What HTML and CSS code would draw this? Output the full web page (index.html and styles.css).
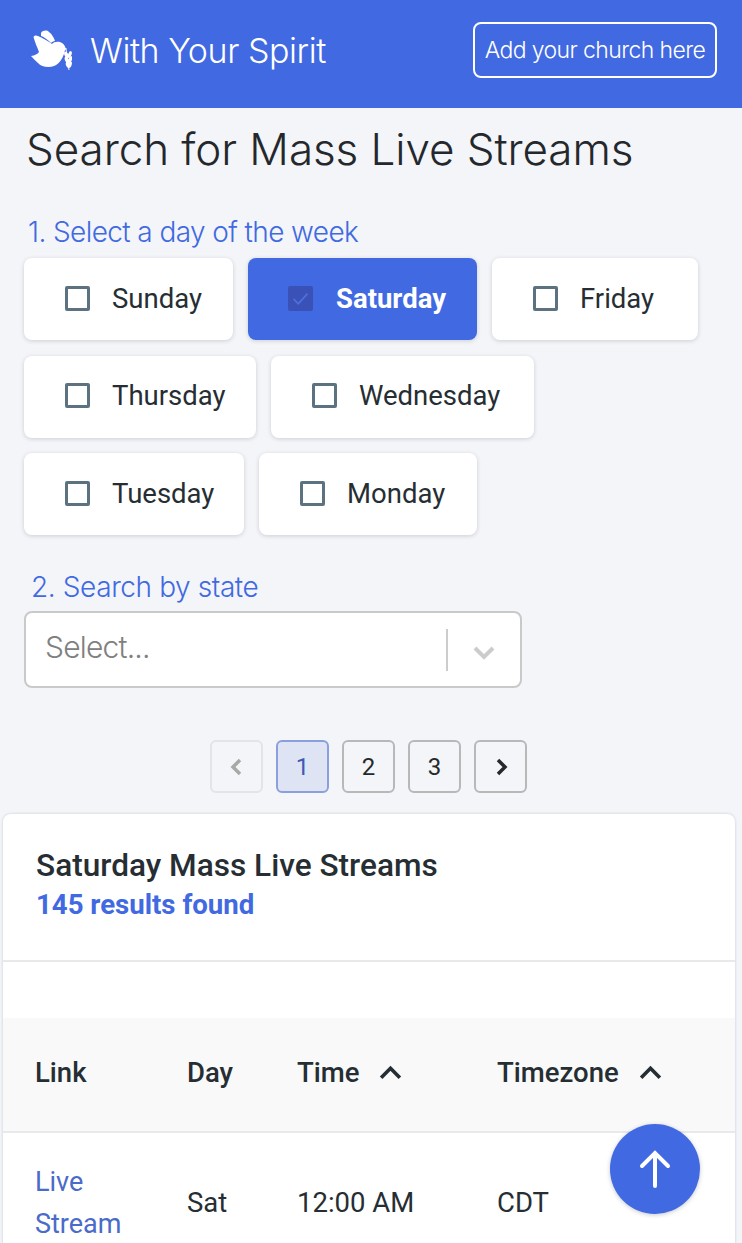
FILE: index.html
```html
<!DOCTYPE html>
<html lang="en">
<head>
  <meta charset="UTF-8">
  <meta name="viewport" content="width=device-width, initial-scale=1.0">
  <title>With Your Spirit</title>
  <link rel="stylesheet" href="styles.css">
</head>
<body>
  <header class="topbar">
    <div class="brand">
      <svg class="dove" viewBox="30 30 42 44" aria-hidden="true">
        <path d="M31 58C35 57.500 37.500 56 39 54C37 49 34.500 43 33.500 39C34 37.500 36 37 38 38C43 40 48 43 52 46C54 43.500 59 43 62 45C64 46 65 48 65.500 50L67 50.500L65 52C64 58 60 66 54 68C49 70 41 69 38 65C36 63 33 60.500 31 58Z"/>
        <path d="M41 35C43 32 47 32 49 34C52 36 54 40 55 43C53 43 52 44 51 45C48 42 44 39 41 38Z"/>
        <path class="stem" d="M66 51L69 72"/>
        <ellipse cx="66.500" cy="57" rx="2" ry="3.500" transform="rotate(-25 66.500 57)"/>
        <ellipse cx="69.800" cy="56.500" rx="1.700" ry="3.500" transform="rotate(20 69.800 56.500)"/>
        <ellipse cx="67" cy="62" rx="2" ry="3.500" transform="rotate(-25 67 62)"/>
        <ellipse cx="70.300" cy="61.500" rx="1.700" ry="3.500" transform="rotate(20 70.300 61.500)"/>
        <ellipse cx="67.800" cy="67" rx="1.800" ry="3.200" transform="rotate(-20 67.800 67)"/>
        <ellipse cx="70.200" cy="66.500" rx="1.500" ry="3.200" transform="rotate(15 70.200 66.500)"/>
      </svg>
      <span class="brand-name">With Your Spirit</span>
    </div>
    <a class="add-church" href="#">Add your church here</a>
  </header>

  <main>
    <section class="search">
      <h1>Search for Mass Live Streams</h1>
      <p class="step">1. Select a day of the week</p>
      <div class="days">
        <label class="day sunday"><span class="box"></span>Sunday</label>
        <label class="day saturday active">
          <span class="box"><svg viewBox="0 0 24 24"><path d="M4 12.500l5.500 5.500L20 6.500"/></svg></span>Saturday
        </label>
        <label class="day friday"><span class="box"></span>Friday</label>
        <label class="day thursday"><span class="box"></span>Thursday</label>
        <label class="day wednesday"><span class="box"></span>Wednesday</label>
        <label class="day tuesday"><span class="box"></span>Tuesday</label>
        <label class="day monday"><span class="box"></span>Monday</label>
      </div>
      <p class="step step-state">2. Search by state</p>
      <div class="select">
        <span class="placeholder">Select...</span>
        <span class="divider"></span>
        <svg class="caret" viewBox="0 0 24 24"><path d="M3 8l9 9 9-9"/></svg>
      </div>
    </section>

    <nav class="pager">
      <a class="disabled" href="#"><svg viewBox="0 0 24 24"><path d="M15 5l-7 7 7 7"/></svg></a>
      <a class="current" href="#">1</a>
      <a href="#">2</a>
      <a href="#">3</a>
      <a href="#"><svg viewBox="0 0 24 24"><path d="M9 5l7 7-7 7"/></svg></a>
    </nav>

    <section class="results">
      <div class="results-head">
        <h2>Saturday Mass Live Streams</h2>
        <p>145 results found</p>
      </div>
      <div class="results-gap"></div>
      <table>
        <thead>
          <tr>
            <th class="col-link">Link</th>
            <th class="col-day">Day</th>
            <th class="col-time">Time <svg class="sort" viewBox="0 0 24 24"><path d="M3 17L12 8l9 9"/></svg></th>
            <th>Timezone <svg class="sort" viewBox="0 0 24 24"><path d="M3 17L12 8l9 9"/></svg></th>
          </tr>
        </thead>
        <tbody>
          <tr>
            <td><a href="#">Live Stream</a></td>
            <td>Sat</td>
            <td>12:00 AM</td>
            <td>CDT</td>
          </tr>
        </tbody>
      </table>
    </section>
  </main>

  <a class="to-top" href="#" aria-label="Back to top">
    <svg viewBox="0 0 32 38"><path d="M16 36V3M3 16L16 3l13 13"/></svg>
  </a>
</body>
</html>
```

FILE: styles.css
```css
:root {
  --blue: #4169e1;
  --page: #f3f5f8;
  --dark: #262e33;
  --line: #e8e9ea;
}

* {
  box-sizing: border-box;
  padding: 0;
  margin: 0;
}

html, body {
  height: 100vh;
  overflow: hidden;
}

body {
  background-color: var(--page);
  color: var(--dark);
  font-family: Roboto, sans-serif;
  font-size: 27.500px;
}

.topbar {
  display: flex;
  justify-content: space-between;
  align-items: center;
  height: 108px;
  padding: 0 25px 8px 30px;
  background-color: var(--blue);
  color: #fff;
  font-family: Inter, sans-serif;
}

.brand {
  display: flex;
  align-items: center;
  gap: 18px;
}

.dove {
  width: 42px;
  height: 44px;
  fill: #fff;
}

.dove .stem {
  fill: none;
  stroke: #fff;
  stroke-width: 1;
}

.brand-name {
  font-size: 34px;
  font-weight: 300;
  letter-spacing: -0.450px;
}

.add-church {
  display: flex;
  align-items: center;
  justify-content: center;
  width: 244px;
  height: 56px;
  border: 2px solid #fff;
  border-radius: 8px;
  color: #fff;
  font-size: 23px;
  font-weight: 300;
  letter-spacing: -0.600px;
  text-decoration: none;
}

.search {
  padding: 14px 0 0 24px;
}

h1 {
  margin-left: 2px;
  color: #24282c;
  font-family: Inter, sans-serif;
  font-size: 44px;
  font-weight: 350;
  line-height: 54px;
  letter-spacing: -0.080px;
}

.step {
  margin: 38px 0 8px 4px;
  color: var(--blue);
  font-family: Inter, sans-serif;
  font-size: 28px;
  font-weight: 350;
  line-height: 36px;
  letter-spacing: -0.600px;
}

.days {
  display: flex;
  flex-wrap: wrap;
  gap: 15.500px 15px;
  width: 690px;
}

.day {
  display: flex;
  align-items: center;
  gap: 22px;
  height: 82px;
  padding: 0 0 2px 41px;
  background-color: #fff;
  border-radius: 8px;
  box-shadow: 0 1px 4px rgba(30, 40, 60, 0.18);
}

.sunday { width: 209px; }
.saturday { width: 229px; }
.friday { width: 206px; }
.thursday { width: 232px; }
.wednesday { width: 263px; }
.tuesday { width: 220px; }
.monday { width: 218px; }

.box {
  flex: none;
  display: flex;
  width: 25px;
  height: 25px;
  border: 3px solid #5c7280;
  border-radius: 2px;
}

.day.active {
  gap: 23px;
  padding-left: 40px;
  background-color: var(--blue);
  color: #fff;
  font-weight: 700;
}

.active .box {
  background-color: #3a52b8;
  border: none;
  padding: 2px;
}

.box svg {
  fill: none;
  stroke: #4e6fdc;
  stroke-width: 2;
}

.step-state {
  margin: 34px 0 6px 7px;
  letter-spacing: -0.400px;
}

.select {
  display: flex;
  align-items: center;
  width: 498px;
  height: 77px;
  padding: 0 24px 0 19px;
  background-color: #fff;
  border: 2px solid #c9c9c9;
  border-radius: 8px;
}

.placeholder {
  flex: 1;
  padding-bottom: 6px;
  color: #808080;
  font-family: Inter, sans-serif;
  font-size: 30px;
  font-weight: 350;
  letter-spacing: -0.800px;
}

.divider {
  width: 2px;
  height: 42px;
  margin-right: 24px;
  background-color: #ccc;
}

.caret {
  width: 24px;
  height: 24px;
  margin-top: 4px;
  fill: none;
  stroke: #ccc;
  stroke-width: 4;
}

.pager {
  display: flex;
  justify-content: center;
  gap: 13px;
  margin: 52px 0 0 -5px;
}

.pager a {
  display: flex;
  align-items: center;
  justify-content: center;
  width: 53px;
  height: 53px;
  border: 2px solid #b8b8b8;
  border-radius: 6px;
  color: #26292c;
  font-size: 24px;
  text-decoration: none;
}

.pager svg {
  width: 24px;
  height: 24px;
  fill: none;
  stroke: #26292c;
  stroke-width: 3.500;
}

.pager .disabled {
  border-color: #e3e4e6;
}

.pager .disabled svg {
  stroke: #a8a8a8;
}

.pager .current {
  background-color: #dfe4f4;
  border-color: #8b9fdd;
  color: #3f5bb5;
}

.results {
  width: 732px;
  height: 430px;
  overflow: hidden;
  margin: 21px 0 0 3px;
  background-color: #fff;
  border-radius: 8px 8px 0 0;
  box-shadow: 0 0 3px rgba(30, 40, 60, 0.2);
}

.results-head {
  height: 148px;
  padding: 32px 0 0 33px;
  border-bottom: 2px solid var(--line);
}

h2 {
  font-size: 31.600px;
  font-weight: 500;
  line-height: 40px;
}

.results-head p {
  color: var(--blue);
  font-size: 27.600px;
  font-weight: 700;
  line-height: 38px;
}

.results-gap {
  height: 56px;
}

table {
  width: 100%;
  border-collapse: collapse;
  table-layout: fixed;
}

th, td {
  text-align: left;
}

th {
  height: 114px;
  padding-bottom: 4px;
  background-color: #f9f9fa;
  border-bottom: 2px solid var(--line);
  font-weight: 500;
  white-space: nowrap;
}

th:first-child, td:first-child {
  padding-left: 32px;
}

.col-link { width: 184px; }
.col-day { width: 110px; }
.col-time { width: 200px; }

.sort {
  width: 25px;
  height: 25px;
  margin-left: 12px;
  vertical-align: -3px;
  fill: none;
  stroke: var(--dark);
  stroke-width: 3.500;
}

td {
  padding: 28px 0;
  line-height: 42px;
}

td a {
  display: block;
  width: 100px;
  color: #4a6bc9;
  font-size: 27px;
  text-decoration: none;
}

.to-top {
  position: fixed;
  right: 42px;
  bottom: 29px;
  display: flex;
  align-items: center;
  justify-content: center;
  width: 90px;
  height: 90px;
  background-color: var(--blue);
  border-radius: 50%;
  box-shadow: 0 1px 4px rgba(30, 40, 60, 0.25);
}

.to-top svg {
  width: 32px;
  height: 38px;
  fill: none;
  stroke: #fff;
  stroke-width: 4;
  stroke-linecap: round;
}
```
